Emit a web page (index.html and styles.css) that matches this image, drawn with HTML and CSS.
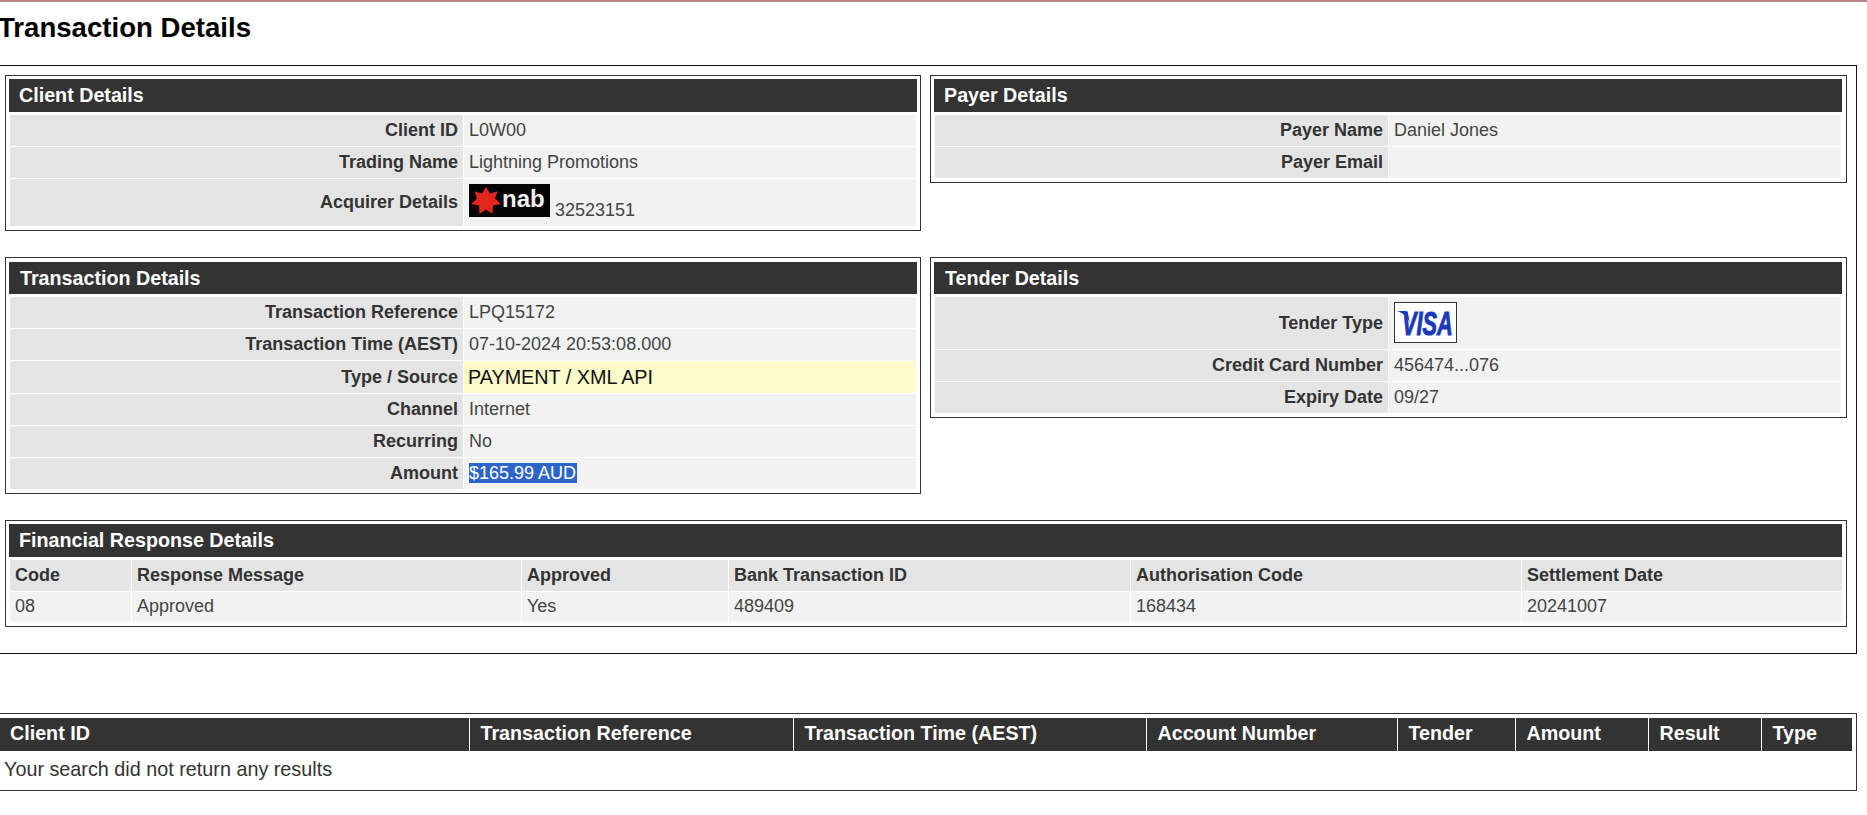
FILE: index.html
```html
<!DOCTYPE html>
<html lang="en">
<head>
<meta charset="utf-8">
<title>Transaction Details</title>
<link rel="stylesheet" href="styles.css">
</head>
<body>
<div class="strip"></div>
<div class="page">
  <h1 class="title">Transaction Details</h1>
  <div class="outer">
    <div class="pair pair-first">
      <section class="panel">
        <h2 class="hd">Client Details</h2>
        <table class="kv">
          <tr><th>Client ID</th><td>L0W00</td></tr>
          <tr><th>Trading Name</th><td>Lightning Promotions</td></tr>
          <tr class="tall"><th>Acquirer Details</th><td>
            <svg class="nab" width="81" height="33" viewBox="0 0 81 33"><rect width="81" height="33" fill="#050505"/><polygon fill="#e2261c" points="17,3 21,9.5 28.5,7.5 26,14.5 32,20 24,21.5 23.5,30 17,25.5 10.5,30 10,21.5 2,20 8,14.5 5.5,7.5 13,9.5"/><text class="nab-text" x="33" y="23">nab</text></svg> 32523151</td></tr>
        </table>
      </section>
      <section class="panel panel-right">
        <h2 class="hd">Payer Details</h2>
        <table class="kv">
          <tr><th>Payer Name</th><td>Daniel Jones</td></tr>
          <tr><th>Payer Email</th><td></td></tr>
        </table>
      </section>
    </div>
    <div class="pair pair-second">
      <section class="panel panel-second">
        <h2 class="hd">Transaction Details</h2>
        <table class="kv">
          <tr><th>Transaction Reference</th><td>LPQ15172</td></tr>
          <tr><th>Transaction Time (AEST)</th><td>07-10-2024 20:53:08.000</td></tr>
          <tr class="hl"><th>Type / Source</th><td>PAYMENT / XML API</td></tr>
          <tr><th>Channel</th><td>Internet</td></tr>
          <tr><th>Recurring</th><td>No</td></tr>
          <tr><th>Amount</th><td><span class="sel">$165.99 AUD</span></td></tr>
        </table>
      </section>
      <section class="panel panel-second panel-right">
        <h2 class="hd">Tender Details</h2>
        <table class="kv">
          <tr class="card"><th>Tender Type</th><td>
            <svg class="visa" width="63" height="41" viewBox="0 0 63 41"><rect x="0.5" y="0.5" width="62" height="40" fill="#fff" stroke="#333"/><path fill="#1c39bb" d="M3 9h8c2 0 3 1 3 3l2 9C14 15 9 11 3 9z"/><text class="visa-text" transform="translate(8 33) scale(0.66 1)">VISA</text></svg></td></tr>
          <tr><th>Credit Card Number</th><td>456474...076</td></tr>
          <tr><th>Expiry Date</th><td>09/27</td></tr>
        </table>
      </section>
    </div>
    <section class="panel panel-wide">
      <h2 class="hd">Financial Response Details</h2>
      <table class="fin">
        <colgroup><col class="f1"><col class="f2"><col class="f3"><col class="f4"><col class="f5"><col class="f6"></colgroup>
        <tr><th>Code</th><th>Response Message</th><th>Approved</th><th>Bank Transaction ID</th><th>Authorisation Code</th><th>Settlement Date</th></tr>
        <tr><td>08</td><td>Approved</td><td>Yes</td><td>489409</td><td>168434</td><td>20241007</td></tr>
      </table>
    </section>
  </div>
  <div class="results">
    <table class="res">
      <colgroup><col class="r1"><col class="r2"><col class="r3"><col class="r4"><col class="r5"><col class="r6"><col class="r7"><col class="r8"></colgroup>
      <tr><th>Client ID</th><th>Transaction Reference</th><th>Transaction Time (AEST)</th><th>Account Number</th><th>Tender</th><th>Amount</th><th>Result</th><th>Type</th></tr>
      <tr><td colspan="8">Your search did not return any results</td></tr>
    </table>
  </div>
</div>
</body>
</html>
```
FILE: styles.css
```css
* { box-sizing: border-box; }
html, body { margin: 0; padding: 0; background: #fff; }
body { font-family: "Liberation Sans", Arial, sans-serif; color: #333; overflow: hidden; }
.strip { height: 2px; background: #b9858b; }
.page { margin-left: -6px; width: 1863px; }
.title { margin: 5px 0 16px 5px; font-size: 27.6px; line-height: 42px; font-weight: bold; color: #000; white-space: nowrap; text-indent: -1px; }
.outer { border: 1px solid #111; height: 589px; padding: 9px 8px 0 10px; }
.pair { display: grid; grid-template-columns: 916px 917px; column-gap: 9px; align-items: start; }
.pair-first { height: 182px; }
.pair-second { height: 263px; }
.panel { border: 1px solid #333; padding: 3px; background: #fff; }
.panel-second { padding-top: 4px; }
.panel-right { padding-right: 4px; }
.panel-wide { width: 1842px; padding-right: 4px; }
.hd { margin: 0 0 2px; height: 33px; line-height: 33px; padding-left: 10px; background: #333; color: #fff; font-size: 19.7px; font-weight: bold; }
.panel-second .hd { height: 32px; line-height: 32px; padding-left: 11px; }
.kv, .fin { width: 100%; border-collapse: separate; border-spacing: 1px; table-layout: fixed; }
.kv th, .kv td { height: 31px; padding: 0 5px 1px; line-height: 20px; vertical-align: middle; }
.fin th, .fin td { height: 31px; padding: 0 5px 1px; line-height: 20px; vertical-align: middle; text-align: left; }
.kv th { width: 453px; text-align: right; background: #e4e4e4; font-size: 18px; font-weight: bold; }
.kv td { background: #f2f2f2; font-size: 18px; color: #444; }
.kv .tall th, .kv .tall td { height: 47px; }
.kv .card th, .kv .card td { height: 52px; }
.kv .hl td { height: 32px; padding: 0 5px 0 4px; background: #fdfbc9; color: #111; font-size: 19.8px; }
.kv .hl th { height: 32px; padding-bottom: 0; }
.sel { background: #2d64c9; color: #fff; padding-right: 1px; }
.nab { vertical-align: baseline; margin-bottom: -1px; }
.nab-text { fill: #eee; font-family: "Liberation Sans", Arial, sans-serif; font-weight: bold; font-size: 24px; }
.visa { display: block; }
.visa-text { fill: #1c39bb; stroke: #1c39bb; stroke-width: 1px; font-family: "Liberation Sans", Arial, sans-serif; font-weight: bold; font-style: italic; font-size: 33px; }
.fin th { background: #e4e4e4; font-size: 18px; font-weight: bold; }
.fin td { background: #f2f2f2; color: #444; font-size: 18px; height: 30px; padding-bottom: 2px; }
.f1 { width: 121px; } .f2 { width: 389px; } .f3 { width: 206px; } .f4 { width: 401px; } .f5 { width: 390px; } .f6 { width: 320px; }
.results { margin-top: 59px; border: 1px solid #333; height: 78px; padding: 4px 3px 0 4px; }
.res { width: 1853px; border-collapse: collapse; table-layout: fixed; }
.res th { height: 33px; padding: 0 0 2px 11px; border-left: 1px solid #fff; background: #333; color: #fff; font-size: 19.7px; font-weight: bold; text-align: left; }
.res th:first-child { border-left: 0; }
.res td { height: 37px; padding: 0 0 1px 5px; font-size: 19.8px; color: #333; }
.r1 { width: 470px; } .r2 { width: 324px; } .r3 { width: 353px; } .r4 { width: 251px; } .r5 { width: 118px; } .r6 { width: 133px; } .r7 { width: 113px; } .r8 { width: 91px; }
```
